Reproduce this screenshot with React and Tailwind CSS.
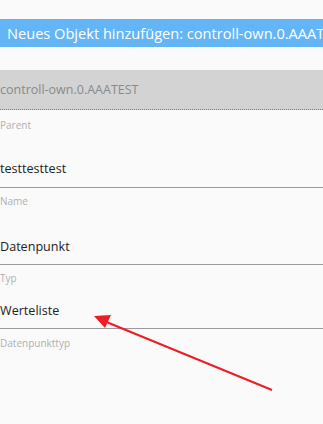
export default function App() {
  return (
    <div className="relative w-[323px] h-[424px] overflow-hidden bg-[#fafafa]" style={{ fontFamily: '"Open Sans", "Noto Sans", sans-serif' }}>
      <div className="pt-[19px]">
        <div className="h-[28px] bg-[#64b5f6] pl-[7px] text-white text-[14.6px] leading-[28px] whitespace-nowrap overflow-hidden">
          Neues Objekt hinzufügen: controll-own.0.AAATEST
        </div>
      </div>
      <div className="mt-[23px] h-[40px] bg-[#d3d3d3] border-b border-dotted border-[#777] flex items-center text-[12.5px] text-[#8a8a8a] pt-[2px]">
        controll-own.0.AAATEST
      </div>
      <div className="h-[78px] border-b border-[#9a9a9a] flex flex-col">
        <div className="pt-[8px] text-[10px] leading-[14px] text-[#b0b0b0]">Parent</div>
        <div className="mt-auto pb-[9px] text-[12.6px] leading-[18px] text-[#222]">testtesttest</div>
      </div>
      <div className="h-[77px] border-b border-[#9a9a9a] flex flex-col">
        <div className="pt-[6px] text-[10px] leading-[14px] text-[#b0b0b0]">Name</div>
        <div className="mt-auto pb-[8px] text-[12.6px] leading-[18px] text-[#222]">Datenpunkt</div>
      </div>
      <div className="h-[64px] border-b border-[#9a9a9a] flex flex-col">
        <div className="pt-[6px] text-[10px] leading-[14px] text-[#b0b0b0]">Typ</div>
        <div className="mt-auto pb-[8px] text-[12.6px] leading-[18px] text-[#222]">Werteliste</div>
      </div>
      <div className="pt-[7px] text-[10px] leading-[14px] text-[#b0b0b0]">Datenpunkttyp</div>
      <svg className="absolute left-0 top-0" width="323" height="424" viewBox="0 0 323 424">
        <line x1="272" y1="390" x2="104" y2="321" stroke="#ee1c24" strokeWidth="2" />
        <polygon points="94,316 111,315 105,328" fill="#ee1c24" />
      </svg>
    </div>
  );
}
